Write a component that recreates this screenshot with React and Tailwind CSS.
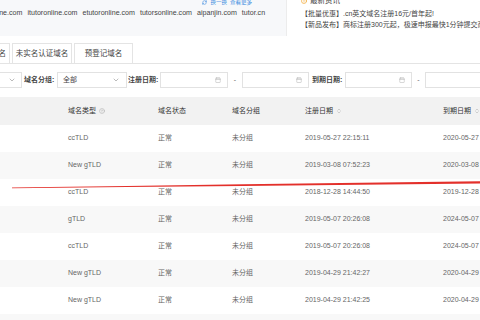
import React from 'react';
import { ChevronDown, Calendar, HelpCircle, ChevronsUpDown, RefreshCw, CircleAlert } from 'lucide-react';

const domains = ['line.com', 'itutoronline.com', 'etutoronline.com', 'tutorsonline.com', 'aipanjin.com', 'tutor.cn'];

const rows = [
  ['ccTLD', '2019-05-27 22:15:11', '2020-05-27'],
  ['New gTLD', '2019-03-08 07:52:23', '2020-03-08'],
  ['ccTLD', '2018-12-28 14:44:50', '2019-12-28'],
  ['gTLD', '2019-05-07 20:26:08', '2024-05-07'],
  ['ccTLD', '2019-05-07 20:26:08', '2024-05-07'],
  ['New gTLD', '2019-04-29 21:42:27', '2020-04-29'],
  ['New gTLD', '2019-04-29 21:42:25', '2020-04-29'],
  ['gTLD', '2019-04-29 21:42:20', '2020-04-29'],
];

const DateInput = ({ w }) => (
  <div className={`${w} shrink-0 h-[16px] border border-[#e2e2e2] bg-white flex items-center justify-end pr-[6px]`}>
    <Calendar size={6} className="text-[#b0b0b0]" strokeWidth={2} />
  </div>
);

const Label = ({ children }) => (
  <span className="font-bold text-[#444] text-[7px] whitespace-nowrap">{children}</span>
);

export default function App() {
  return (
    <div
      className="relative w-[480px] h-[320px] overflow-hidden bg-white text-[7px] text-[#555]"
      style={{ fontFamily: '"Liberation Sans", "Noto Sans CJK SC", sans-serif' }}
    >
      {/* top strip */}
      <div className="flex h-[36px]">
        <div className="w-[287px] shrink-0 bg-[#f7f8fa] border-r border-[#ececec] flex flex-col overflow-hidden">
          <div className="flex justify-end items-center gap-[3px] pr-[34px] h-[8px] -mt-[2px] text-[#3b8be0] whitespace-nowrap text-[5.5px]">
            <RefreshCw size={5} strokeWidth={2.5} />
            <span>换一换</span>
            <span>查看更多</span>
          </div>
          <div className="flex gap-[5px] mt-[3px] -ml-[4px] text-[#444] whitespace-nowrap leading-[9px] text-[7.1px]">
            {domains.map((d) => (
              <span key={d}>{d}</span>
            ))}
          </div>
        </div>
        <div className="flex-1 min-w-0 overflow-hidden pl-[14px] flex flex-col text-[#444] whitespace-nowrap">
          <div className="flex items-center gap-[3px] h-[8px] -mt-[3px] text-[7.5px]">
            <CircleAlert size={6} className="text-[#f0a020]" strokeWidth={2.5} />
            <span>最新资讯</span>
          </div>
          <div className="leading-[11px] mt-[3px]">【批量优惠】.cn英文域名注册16元/首年起!</div>
          <div className="leading-[11px]">【新品发布】商标注册300元起，极速申报最快1分钟提交商标注册</div>
        </div>
      </div>

      {/* tabs */}
      <div className="mt-[7px] flex items-end gap-[2px] border-b border-[#e4e4e4] h-[21px] text-[7.5px] text-[#444]">
        <div className="shrink-0 -ml-[10px] w-[20px] h-[20px] border border-b-0 border-[#e4e4e4] flex items-center justify-end pr-[3px]">名</div>
        <div className="shrink-0 w-[60px] h-[20px] border border-b-0 border-[#e4e4e4] flex items-center justify-center">未实名认证域名</div>
        <div className="shrink-0 w-[59px] h-[20px] border border-b-0 border-[#e4e4e4] flex items-center justify-center">预登记域名</div>
      </div>

      {/* filters */}
      <div className="mt-[8px] flex items-center h-[16px] whitespace-nowrap">
        <div className="shrink-0 -ml-[30px] w-[52px] h-[16px] border border-[#e2e2e2] flex items-center justify-end pr-[5px]">
          <ChevronDown size={8} className="text-[#999]" />
        </div>
        <div className="shrink-0 ml-[2px] w-[33px]"><Label>域名分组:</Label></div>
        <div className="shrink-0 w-[70px] h-[16px] border border-[#e2e2e2] flex items-center justify-between pl-[5px] pr-[6px] text-[#444]">
          <span>全部</span>
          <ChevronDown size={8} className="text-[#999]" />
        </div>
        <div className="shrink-0 ml-[1px] w-[32px]"><Label>注册日期:</Label></div>
        <DateInput w="w-[68px]" />
        <span className="shrink-0 w-[14px] text-center text-[#666]">-</span>
        <DateInput w="w-[67px]" />
        <div className="shrink-0 ml-[3px] w-[33px]"><Label>到期日期:</Label></div>
        <DateInput w="w-[67px]" />
        <span className="shrink-0 w-[13px] text-center text-[#666]">-</span>
        <DateInput w="w-[70px]" />
      </div>

      {/* table */}
      <div className="mt-[9px]">
        <div className="grid grid-cols-[68px_90px_74px_73px_138px_1fr] h-[28px] items-center bg-[#f2f2f2] text-[#333] whitespace-nowrap">
          <div />
          <div className="flex items-center gap-[3px]">
            域名类型 <HelpCircle size={6} className="text-[#aaa]" />
          </div>
          <div>域名状态</div>
          <div>域名分组</div>
          <div className="flex items-center gap-[3px]">
            注册日期 <ChevronsUpDown size={6} className="text-[#aaa]" />
          </div>
          <div className="flex items-center gap-[3px]">
            到期日期 <ChevronsUpDown size={6} className="text-[#aaa]" />
          </div>
        </div>
        {rows.map((r, i) => (
          <div
            key={i}
            className={`grid grid-cols-[68px_90px_74px_73px_138px_1fr] h-[27px] items-center whitespace-nowrap text-[#666] ${
              i % 2 === 1 ? 'bg-[#f8f8f8]' : 'bg-white'
            }`}
          >
            <div />
            <div>{r[0]}</div>
            <div>正常</div>
            <div>未分组</div>
            <div>{r[1]}</div>
            <div>{r[2]}</div>
          </div>
        ))}
      </div>

      {/* red stroke drawn across the shot */}
      <svg className="absolute left-0 top-0 pointer-events-none" width="480" height="320">
        <path d="M12 187.6 Q 240 184.2 480 181.2 L480 183.6 Q 240 186.2 12 188.3 Z" fill="#e3302b" />
      </svg>
    </div>
  );
}
